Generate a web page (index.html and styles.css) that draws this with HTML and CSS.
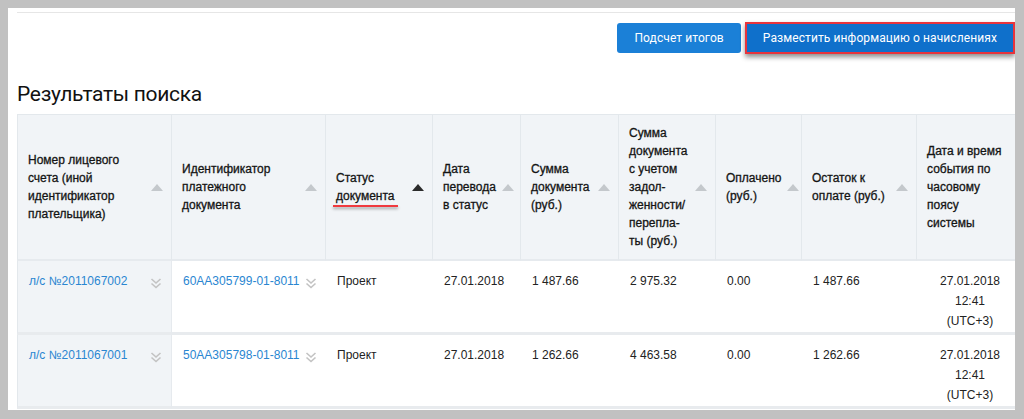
FILE: index.html
```html
<!DOCTYPE html>
<html lang="ru">
<head>
    <meta charset="UTF-8">
    <meta name="viewport" content="width=device-width, initial-scale=1.0">
    <title>Результаты поиска</title>
    <link rel="stylesheet" href="styles.css">
</head>
<body>
    <div class="panel">
        <div class="content">
            <div class="actions">
                <button class="btn">Подсчет итогов</button>
                <button class="btn btn-marked">Разместить информацию о начислениях</button>
            </div>

            <h2 class="title">Результаты поиска</h2>

            <table class="results">
                <colgroup>
                    <col style="width: 155px">
                    <col style="width: 154px">
                    <col style="width: 107px">
                    <col style="width: 88px">
                    <col style="width: 98px">
                    <col style="width: 97px">
                    <col style="width: 86px">
                    <col style="width: 115px">
                    <col style="width: 106px">
                </colgroup>
                <thead>
                    <tr>
                        <th><div class="th-in"><span class="label">Номер лицевого счета (иной идентификатор плательщика)</span><span class="sort"></span></div></th>
                        <th><div class="th-in"><span class="label">Идентификатор платежного документа</span><span class="sort"></span></div></th>
                        <th><div class="th-in"><span class="label">Статус <span class="marked">документа</span></span><span class="sort active"></span></div></th>
                        <th><div class="th-in"><span class="label">Дата перевода в статус</span><span class="sort"></span></div></th>
                        <th><div class="th-in"><span class="label">Сумма документа (руб.)</span><span class="sort"></span></div></th>
                        <th><div class="th-in"><span class="label">Сумма документа с учетом задол-женности/ перепла-ты (руб.)</span><span class="sort"></span></div></th>
                        <th><div class="th-in"><span class="label">Оплачено (руб.)</span><span class="sort"></span></div></th>
                        <th><div class="th-in"><span class="label">Остаток к оплате (руб.)</span><span class="sort"></span></div></th>
                        <th class="th-last"><div class="th-in"><span class="label">Дата и время события по часовому поясу системы</span></div></th>
                    </tr>
                </thead>
                <tbody>
                    <tr>
                        <td class="account">
                            <div class="cell-link"><a href="#">л/с №2011067002</a><span class="expand"><svg viewBox="0 0 12 12" width="12" height="12"><polyline points="1.5,2 6,6 10.5,2"/><polyline points="1.5,6.5 6,10.5 10.5,6.5"/></svg></span></div>
                        </td>
                        <td class="doc">
                            <div class="cell-link tight"><a href="#">60AA305799-01-8011</a><span class="expand"><svg viewBox="0 0 12 12" width="12" height="12"><polyline points="1.5,2 6,6 10.5,2"/><polyline points="1.5,6.5 6,10.5 10.5,6.5"/></svg></span></div>
                        </td>
                        <td>Проект</td>
                        <td>27.01.2018</td>
                        <td>1 487.66</td>
                        <td>2 975.32</td>
                        <td>0.00</td>
                        <td>1 487.66</td>
                        <td class="when">27.01.2018<br>12:41<br>(UTC+3)</td>
                    </tr>
                    <tr>
                        <td class="account">
                            <div class="cell-link"><a href="#">л/с №2011067001</a><span class="expand"><svg viewBox="0 0 12 12" width="12" height="12"><polyline points="1.5,2 6,6 10.5,2"/><polyline points="1.5,6.5 6,10.5 10.5,6.5"/></svg></span></div>
                        </td>
                        <td class="doc">
                            <div class="cell-link tight"><a href="#">50AA305798-01-8011</a><span class="expand"><svg viewBox="0 0 12 12" width="12" height="12"><polyline points="1.5,2 6,6 10.5,2"/><polyline points="1.5,6.5 6,10.5 10.5,6.5"/></svg></span></div>
                        </td>
                        <td>Проект</td>
                        <td>27.01.2018</td>
                        <td>1 262.66</td>
                        <td>4 463.58</td>
                        <td>0.00</td>
                        <td>1 262.66</td>
                        <td class="when">27.01.2018<br>12:41<br>(UTC+3)</td>
                    </tr>
                </tbody>
            </table>
        </div>
    </div>
</body>
</html>
```

FILE: styles.css
```css
html, body {
    margin: 0;
}

body {
    height: 419px;
    box-sizing: border-box;
    padding: 8px 9px 9px 8px;
    background-color: #c1c1c1; /* grey frame round the page */
    font-family: "Liberation Sans", Arial, sans-serif;
    overflow: hidden;
}

.panel {
    height: 402px;
    background-color: #ffffff;
    padding: 4px 0 0 9px;
    box-sizing: border-box;
    overflow: hidden;
}

.content {
    width: 1006px;
    border-top: 1px solid #e6e6e6;
}

.actions {
    display: flex;
    justify-content: flex-end;
    align-items: flex-start;
    gap: 4px;
    margin-top: 9px;
    padding-right: 8px;
}

.btn {
    height: 30px;
    margin-top: 1px;
    padding: 0 17px;
    border: none;
    border-radius: 3px;
    background-color: #1b80d7;
    color: #ffffff;
    font-family: Roboto, "Liberation Sans", sans-serif;
    font-size: 12px;
    letter-spacing: 0.1px;
    cursor: pointer;
}

/* the button picked out with a red frame */
.btn-marked {
    height: 32px;
    margin-top: 0;
    padding: 0 16px;
    border: 2px solid #e8343c;
    border-radius: 0;
    background-color: #0f70cb;
    box-shadow: 0 3px 5px rgba(0, 0, 0, 0.45);
}

.title {
    margin: 27px 0 7px;
    font-family: Roboto, "Liberation Sans", sans-serif;
    font-size: 21px;
    line-height: 26px;
    letter-spacing: -0.3px;
    font-weight: normal;
    color: #111111;
}

.results {
    width: 1006px;
    table-layout: fixed;
    border-collapse: separate;
    border-spacing: 0;
    font-size: 12px;
}

.results th {
    height: 147px;
    box-sizing: border-box;
    padding: 0 8px 0 10px;
    background-color: #f1f4f7;
    border-top: 1px solid #e3e8ec;
    border-right: 1px solid #e3e8ec;
    border-bottom: 2px solid #e6eaee;
    text-align: left;
    vertical-align: middle;
    font-weight: normal;
    line-height: 18px;
    color: #141414;
    -webkit-text-stroke: 0.3px #141414;
}

.results th:first-child {
    border-left: 1px solid #e3e8ec;
}

.results th.th-last {
    padding-right: 20px;
}

.th-in {
    display: flex;
    align-items: center;
    gap: 6px;
}

.label {
    flex: 1;
}

.sort {
    width: 0;
    height: 0;
    border-left: 6px solid transparent;
    border-right: 6px solid transparent;
    border-bottom: 7px solid #c4c8cc;
}

.sort.active {
    border-bottom-color: #2b2b2b;
}

/* red mark under "документа" */
.marked {
    position: relative;
}

.marked::after {
    content: "";
    position: absolute;
    left: -3px;
    right: -3px;
    top: calc(100% + 2px);
    height: 2px;
    background-color: #f03a3f;
    box-shadow: 0 2px 3px rgba(0, 0, 0, 0.35);
}

.results td {
    height: 74px;
    box-sizing: border-box;
    padding: 10px 10px 0 11px;
    border-bottom: 3px solid #e8ebee;
    vertical-align: top;
    line-height: 20px;
    color: #222222;
}

.results td.account {
    padding-left: 11px;
    padding-right: 9px;
    background-color: #f1f4f7;
    border-left: 1px solid #e3e8ec;
    border-right: 1px solid #e6eaee;
}

.results td.doc {
    padding-left: 11px;
    padding-right: 2px;
}

.results td.when {
    text-align: center;
    padding-left: 0;
    padding-right: 0;
}

.cell-link {
    display: flex;
    align-items: center;
    justify-content: space-between;
    white-space: nowrap;
}

.cell-link.tight {
    justify-content: flex-start;
    gap: 5px;
}

.cell-link a {
    color: #2a86d1;
    text-decoration: none;
}

.expand {
    display: flex;
    margin-top: 3px;
}

.expand svg {
    fill: none;
    stroke: #c3c3c3;
    stroke-width: 1.6;
}
```
